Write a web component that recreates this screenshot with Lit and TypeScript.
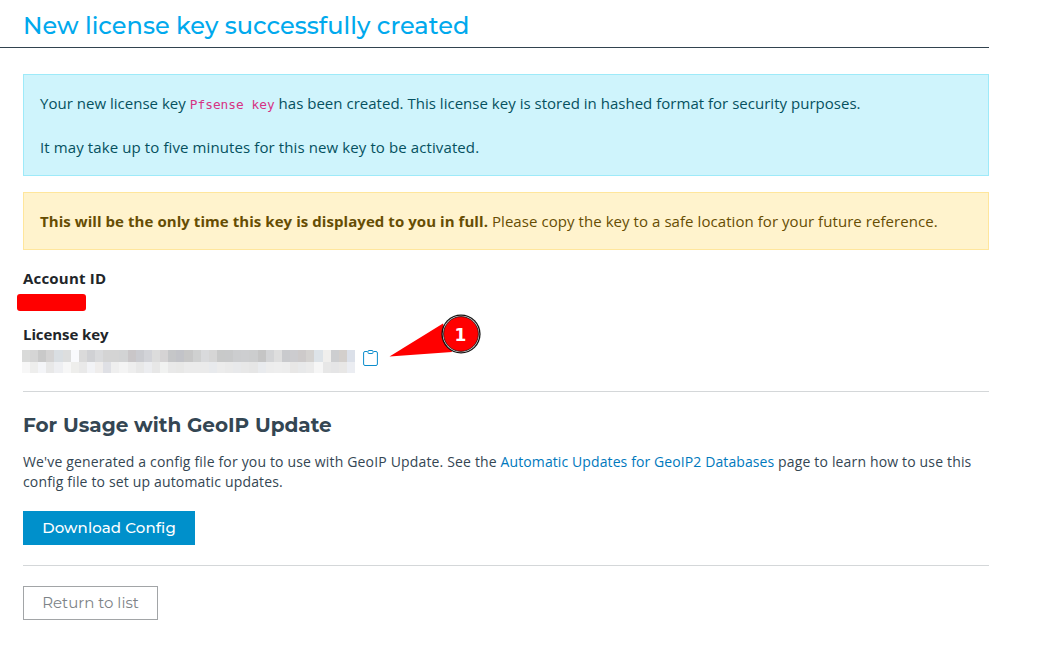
import { LitElement, html, css } from "lit";
import { customElement } from "lit/decorators.js";
import { styleMap } from "lit/directives/style-map.js";

const MASK_TOP = "d9dad9 d5d5d5 c9c9c9 d4d3d3 d9dee2 dddede f9fafd dadada d0d1d4 d9dadc d4d4d4 d4d4d4 d2d3d4 c9c6c8 cacbd0 d2d3d8 dcdcdc d5d3d4 c5c6c8 c2c3c8 c7c7c7 cfd0d0 d9dadc d6d6d6 c8c9c9 c8c9ca cccdcf cdced0 cccdce c5c5c5 d3d4d6 dedede c9cacd cccccf cdcaca d4d2d0 dde3e8 f0efed cdced0 d3cfcc dbe0e9".split(" ");
const MASK_BOTTOM = "f7f7f7 eeeeed f4f5f8 e8e8e8 eeeff2 f7f7f7 eeeeec e9e9e9 f2f3f6 efedec dfe0e5 efefef f4f4f4 eeeeee e8e8e8 ecedf0 e7e7e7 f1f2f1 e9e9e9 e8e8e7 ebebeb ebebeb ebebeb e8eaed ececec eaeaea e8e9eb e8e8e8 e6e6e6 e9ebee ededed eeeeee ededed e8e7e6 e8e9ea ebebeb f6f6f6 e7e7e7 e5e5e6 e8e7e6 ebedf2".split(" ");

@customElement("app-root")
export class AppRoot extends LitElement {
  static styles = css`
    :host { display: block; width: 989px; position: relative; background: #fff; color: #212529;
      font: 15px/24px "Open Sans", "Noto Sans", sans-serif; white-space: nowrap; }
    * { box-sizing: border-box; }
    h1, h2, p { margin: 0; }
    h1 { height: 48px; padding: 8px 0 0 23px; border-bottom: 1px solid #32434f; color: #00a9ed;
      font: 500 24px/36px Montserrat, Inter, sans-serif; }
    main { padding: 26px 0 0 23px; }
    .alert { padding: 16px; border: 1px solid; margin-bottom: 16px; }
    .info { background: #cff4fc; border-color: #9eeaf9; color: #055160; letter-spacing: 0.018px; }
    .warning { background: #fff3cd; border-color: #ffe69c; color: #664d03; margin-bottom: 16px; letter-spacing: 0.062px; }
    .gap { margin-top: 20px; letter-spacing: 0.105px; }
    code { font: 12.8px "DejaVu Sans Mono", monospace; color: #d63384; }
    .label { font-weight: 700; letter-spacing: -0.09px; }
    .account { letter-spacing: 0.2px; }
    .redacted { width: 69px; height: 17px; margin: 4px 0 11px -6px; background: #f00; border-radius: 3px; }
    .key { display: flex; align-items: flex-start; height: 45px; padding-top: 4px; margin-left: -1px; }
    .mask { display: grid; width: 333px; height: 23px; grid-template: 12px 11px / repeat(41, 1fr); }
    .clip { width: 15px; height: 17px; margin-left: 8px; }
    hr { margin: 0; border: 0; height: 1px; background: #d4d7d9; }
    h2 { margin-top: 19px; font: 700 20px/28px Montserrat, Inter, sans-serif; color: #344653; }
    .usage { margin: 13px 0 19px; font-size: 14px; line-height: 20px; letter-spacing: 0.16px; color: #344653; }
    a { color: #0079bd; letter-spacing: 0.1px; text-decoration: none; }
    button { display: block; height: 34px; padding: 0; border: 0; font: 500 15px/32px Montserrat, Inter, sans-serif; text-align: center; }
    .primary { width: 172px; background: #0090cb; color: #fff; margin-bottom: 20px; letter-spacing: 0.1px; }
    .secondary { width: 135px; margin-top: 20px; border: 1px solid #a2a5a7; background: #fff; color: #7d8387; font-weight: 400; }
    .callout { position: absolute; left: 386px; top: 312px; width: 98px; height: 48px; }
    .num { font: 700 17px "DejaVu Sans", sans-serif; fill: #fff; }
  `;
  render() {
    return html`
      <h1>New license key successfully created</h1>
      <main>
        <section class="alert info">
          <p>Your new license key <code>Pfsense key</code> has been created. This license key is stored in hashed format for security purposes.</p>
          <p class="gap">It may take up to five minutes for this new key to be activated.</p>
        </section>
        <section class="alert warning"><b>This will be the only time this key is displayed to you in full.</b> Please copy the key to a safe location for your future reference.</section>
        <div class="label account">Account ID</div>
        <div class="redacted"></div>
        <div class="label">License key</div>
        <div class="key">
          <div class="mask">${[...MASK_TOP, ...MASK_BOTTOM].map(c => html`<i style=${styleMap({ background: "#" + c })}></i>`)}</div>
          <svg class="clip" viewBox="0 0 15 17" fill="none" stroke="#0c8dcc">
            <path d="M4.5 1.5H2Q.6 1.5.6 3v11q0 1.5 1.4 1.5h11q1.4 0 1.4-1.5V3Q14.4 1.5 13 1.5h-2.5" />
            <rect x="5" y=".5" width="5" height="3" rx=".8" />
          </svg>
        </div>
        <hr />
        <h2>For Usage with GeoIP Update</h2>
        <p class="usage">We've generated a config file for you to use with GeoIP Update. See the <a>Automatic Updates for GeoIP2 Databases</a> page to learn how to use this<br />config file to set up automatic updates.</p>
        <button class="primary">Download Config</button>
        <hr />
        <button class="secondary">Return to list</button>
      </main>
      <svg class="callout" viewBox="386 312 98 48">
        <path d="M389.5 356.5 443 323.5 452 352Z" fill="#f00" />
        <circle cx="461" cy="334" r="19.6" fill="#111" />
        <circle cx="461" cy="334" r="18.3" fill="#fff" />
        <circle cx="461" cy="334" r="17.4" fill="#f00" stroke="#111" stroke-width=".8" />
        <text class="num" x="460.5" y="340.5" text-anchor="middle">1</text>
      </svg>`;
  }
}
